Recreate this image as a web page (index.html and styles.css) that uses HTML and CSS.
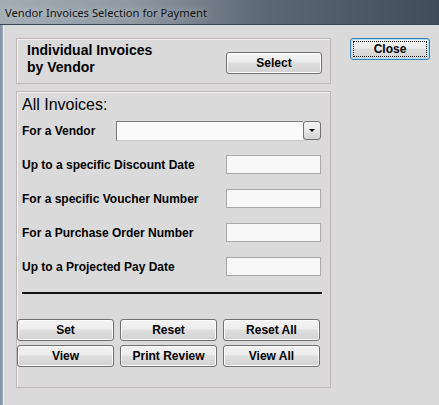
FILE: index.html
```html
<!DOCTYPE html>
<html>
<head>
<meta charset="utf-8">
<link rel="stylesheet" href="styles.css">
</head>
<body>
<div class="window">
  <div class="titlebar"><span class="title">Vendor Invoices Selection for Payment</span></div>
  <div class="client">
    <div class="main">
      <div class="group group-top">
        <div class="heading">Individual Invoices<br>by Vendor</div>
        <button class="btn btn-select">Select</button>
      </div>
      <div class="group group-all">
        <div class="all-title">All Invoices:</div>
        <div class="row row-vendor">
          <span class="label">For a Vendor</span>
          <div class="combo">
            <div class="combo-field"></div>
            <div class="combo-btn"><span class="arrow"></span></div>
          </div>
        </div>
        <div class="row">
          <span class="label">Up to a specific Discount Date</span>
          <div class="field"></div>
        </div>
        <div class="row">
          <span class="label">For a specific Voucher Number</span>
          <div class="field"></div>
        </div>
        <div class="row">
          <span class="label">For a Purchase Order Number</span>
          <div class="field"></div>
        </div>
        <div class="row">
          <span class="label">Up to a Projected Pay Date</span>
          <div class="field"></div>
        </div>
        <div class="rule"></div>
        <div class="buttons">
          <button class="btn">Set</button>
          <button class="btn">Reset</button>
          <button class="btn">Reset All</button>
          <button class="btn">View</button>
          <button class="btn">Print Review</button>
          <button class="btn">View All</button>
        </div>
      </div>
    </div>
    <div class="side">
      <button class="btn btn-close">Close</button>
    </div>
  </div>
</div>
</body>
</html>
```
FILE: styles.css
```css
html, body {
  margin: 0;
  padding: 0;
}
body {
  width: 439px;
  height: 405px;
  overflow: hidden;
  background: #d9d9d9;
}
.window {
  width: 439px;
  height: 405px;
  display: flex;
  flex-direction: column;
  background: linear-gradient(90deg, #7d8fa3 0, #9aa9b8 3px, #d9d9d9 3px);
}
.titlebar {
  height: 25px;
  flex: none;
  background: linear-gradient(90deg, #a4adb6 0%, #8f99a3 30%, #5c6874 60%, #404c58 100%);
  border-bottom: 1px solid #3a4450;
  display: flex;
  align-items: center;
  padding-left: 5px;
  box-sizing: border-box;
}
.title {
  font-family: "Noto Sans", "DejaVu Sans", sans-serif;
  font-size: 11.2px;
  color: #111;
  text-shadow: 0 0 6px rgba(255,255,255,0.6);
}
.client {
  flex: 1;
  display: flex;
  margin-left: 3px;
  padding: 13px 0 0 12px;
  background: #dadada;
  border-left: 1px solid #f0f0f0;
}
.main {
  width: 315px;
  display: flex;
  flex-direction: column;
  gap: 7px;
}
.group {
  border: 1px solid #bfb6b6;
  box-shadow: inset 1px 1px 0 #f2f2f2;
  box-sizing: border-box;
}
.group-top {
  height: 46px;
  display: flex;
  justify-content: space-between;
  align-items: flex-end;
  padding: 3px 8px 9px 10px;
}
.heading {
  align-self: flex-start;
  font-family: "Liberation Sans", Arial, sans-serif;
  font-weight: bold;
  font-size: 14px;
  line-height: 17px;
  color: #000;
}
.btn {
  font-family: "Liberation Sans", Arial, sans-serif;
  font-weight: bold;
  font-size: 12px;
  color: #000;
  height: 22px;
  width: 97px;
  padding: 0;
  border: 1px solid #707070;
  border-radius: 3px;
  background: linear-gradient(180deg, #f4f4f4 0%, #ececec 45%, #dedede 50%, #d2d2d2 100%);
  box-shadow: inset 0 0 0 1px #fbfbfb;
}
.btn-select {
  width: 96px;
}
.group-all {
  height: 297px;
  padding: 4px 9px 0 5px;
  display: flex;
  flex-direction: column;
}
.all-title {
  font-family: "Liberation Sans", Arial, sans-serif;
  font-size: 16px;
  line-height: 17px;
  color: #000;
  margin-bottom: 8px;
}
.row {
  display: flex;
  justify-content: space-between;
  align-items: center;
  height: 19px;
  margin-bottom: 15px;
}
.row-vendor {
  height: 20px;
  margin-bottom: 14px;
}
.label {
  font-family: "Liberation Sans", Arial, sans-serif;
  font-weight: bold;
  font-size: 12px;
  color: #000;
}
.combo {
  display: flex;
  width: 205px;
  height: 20px;
}
.combo-field {
  flex: 1;
  background: #fafafa;
  border: 1px solid #7a7a7a;
  border-right: none;
  border-bottom-color: #c8c8c8;
}
.combo-btn {
  width: 18px;
  height: 19px;
  box-sizing: border-box;
  border: 1px solid #707070;
  border-radius: 3px;
  background: linear-gradient(180deg, #f4f4f4 0%, #e6e6e6 50%, #d4d4d4 100%);
  display: flex;
  align-items: center;
  justify-content: center;
}
.arrow {
  width: 0;
  height: 0;
  border-left: 3px solid transparent;
  border-right: 3px solid transparent;
  border-top: 3px solid #000;
}
.field {
  width: 95px;
  height: 19px;
  box-sizing: border-box;
  background: #f8f8f8;
  border: 1px solid #a8a8a8;
}
.rule {
  height: 2px;
  background: #111;
  margin-top: 1px;
  width: 300px;
}
.buttons {
  margin-top: 25px;
  margin-left: -5px;
  display: grid;
  grid-template-columns: 97px 97px 97px;
  column-gap: 6px;
  row-gap: 4px;
}
.side {
  padding-left: 19px;
}
.btn-close {
  width: 80px;
  height: 22px;
  border: 1px solid #3c7fb1;
  box-shadow: inset 0 0 0 1px #a6e0f8;
  outline: 1px dotted #000;
  outline-offset: -4px;
}
```
